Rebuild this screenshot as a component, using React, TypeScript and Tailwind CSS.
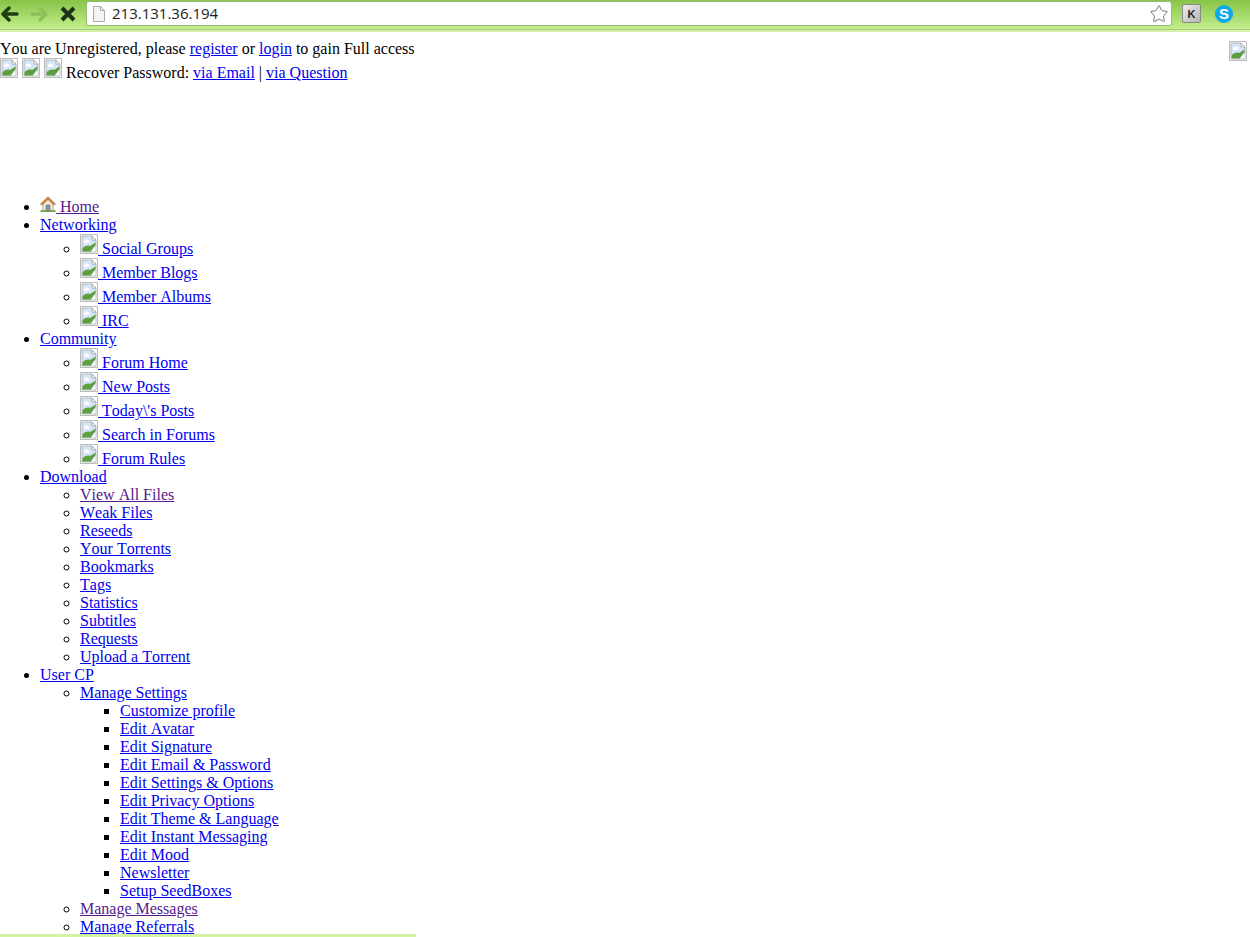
import { Star } from 'lucide-react';
import type { ReactNode } from 'react';

function BrokenImage({ block }: { block?: boolean }) {
  return (
    <svg viewBox="0 0 18 20" className={block ? 'block h-5 w-[18px]' : 'inline h-5 w-[18px] align-baseline'}>
      <rect x="0.5" y="0.5" width="17" height="19" fill="#fff" stroke="#bdbdbd" />
      <path d="M2 2h10l4 4v12H2z" fill="#d3e4fb" stroke="#a9a9a9" strokeWidth="0.8" />
      <path d="M12 2v4h4z" fill="#fff" stroke="#a0a0a0" strokeWidth="0.8" />
      <path d="M4 7c1-2 4-2 5 0 1 1 1 2-1 2H5C3.500 9 3.500 8 4 7z" fill="#fff" />
      <path d="M2.500 17.500V14.500C5 11.500 8 11 10 12l5.500-3.500V11l-5 6.500z" fill="#5f9e3f" />
      <path d="M11.500 17.500l4-5v5z" fill="#fff" />
    </svg>
  );
}

function HomeIcon() {
  return (
    <svg viewBox="0 0 16 16" className="inline h-4 w-4 align-baseline">
      <path d="M0.500 14h15v2h-15z" fill="#6fae45" />
      <path d="M3 7.500 8 3l5 4.500v7H3z" fill="#f3e8d2" stroke="#a88a62" strokeWidth="0.7" />
      <path d="M6 9h4v5.500H6z" fill="#7f94a8" stroke="#5f6f80" strokeWidth="0.5" />
      <path d="M0.500 8 8 0.800 15.500 8l-1.500 1L8 3.400 2 9z" fill="#d2843e" stroke="#95582a" strokeWidth="0.5" />
    </svg>
  );
}

function A({ children, visited }: { children: ReactNode; visited?: boolean }) {
  return (
    <a href="#" className={visited ? 'text-[#551a8b] underline' : 'text-[#0000ee] underline'}>
      {children}
    </a>
  );
}

const networking = ['Social Groups', 'Member Blogs', 'Member Albums', 'IRC'];
const community = ['Forum Home', 'New Posts', "Today\\'s Posts", 'Search in Forums', 'Forum Rules'];
const download = ['Weak Files', 'Reseeds', 'Your Torrents', 'Bookmarks', 'Tags', 'Statistics', 'Subtitles', 'Requests', 'Upload a Torrent'];
const settings = [
  'Customize profile',
  'Edit Avatar',
  'Edit Signature',
  'Edit Email & Password',
  'Edit Settings & Options',
  'Edit Privacy Options',
  'Edit Theme & Language',
  'Edit Instant Messaging',
  'Edit Mood',
  'Newsletter',
  'Setup SeedBoxes',
];

function IconLinks({ items }: { items: string[] }) {
  return (
    <ul className="list-[circle] pl-10">
      {items.map((item) => (
        <li key={item}>
          <A>
            <BrokenImage /> {item}
          </A>
        </li>
      ))}
    </ul>
  );
}

function Toolbar() {
  return (
    <div className="flex h-8 flex-col bg-[#d3f3a3]">
      <div className="flex h-[30px] items-start border-b border-[#a8c884] bg-gradient-to-b from-[#86c445] to-[#c4ee8c] pt-px">
        <div className="flex h-[25px] w-[86px] shrink-0 items-center">
          <svg viewBox="0 0 18 16" className="ml-[1px] h-4 w-[18px]">
            <path d="M8 2 2 8l6 6M3 8h13" fill="none" stroke="#1f3d14" strokeWidth="3.400" strokeLinejoin="round" strokeLinecap="round" />
          </svg>
          <svg viewBox="0 0 18 16" className="ml-[11px] h-4 w-[18px]">
            <path d="M10 2l6 6-6 6M15 8H2" fill="none" stroke="#8fbe5c" strokeWidth="3.400" strokeLinejoin="round" strokeLinecap="round" />
          </svg>
          <svg viewBox="0 0 18 18" className="ml-[11px] h-[18px] w-[18px]">
            <path d="M3 3l12 12M15 3 3 15" fill="none" stroke="#1f3319" strokeWidth="4" />
          </svg>
        </div>
        <div className="flex h-[25px] w-[1086px] shrink-0 items-center justify-between rounded-[3px] border border-[#9ab878] bg-white">
          <div className="flex items-center">
            <svg viewBox="0 0 14 16" className="ml-[5px] h-4 w-[14px]">
              <path d="M1.500 0.500h7l4 4v11h-11z" fill="#f4f4f4" stroke="#a8a8a8" />
              <path d="M8.500 0.500v4h4" fill="none" stroke="#a8a8a8" />
            </svg>
            <span className="ml-[6px] -translate-y-px font-['Open_Sans',sans-serif] text-[15px] text-[#222]">213.131.36.194</span>
          </div>
          <Star className="mr-[2px] h-5 w-5 text-[#777]" strokeWidth={1.2} />
        </div>
        <div className="ml-[10px] mt-[3px] flex h-[19px] w-[19px] shrink-0 items-center justify-center rounded-[2px] border border-[#8a8a8a] bg-gradient-to-br from-[#eeeeee] to-[#b4b4b4] font-['Liberation_Sans',sans-serif] text-[11px] font-bold text-[#222]">
          K
        </div>
        <div className="ml-[14px] mt-[4px] flex h-[18px] w-[18px] shrink-0 items-center justify-center rounded-full bg-[#0aa9e8] font-['Liberation_Sans',sans-serif] text-[15px] font-bold text-white">
          S
        </div>
      </div>
    </div>
  );
}

export default function App() {
  return (
    <div className="relative h-[937px] w-[1250px] overflow-hidden bg-white font-['Liberation_Serif',serif] text-[16px] leading-[18px] text-black [font-kerning:none]">
      <Toolbar />
      <div className="pt-2">
        <div className="float-right mr-[3px] mt-px">
          <BrokenImage block />
        </div>
        <div>
          You are Unregistered, please <A>register</A> or <A>login</A> to gain Full access
        </div>
        <div>
          <BrokenImage /> <BrokenImage /> <BrokenImage /> Recover Password: <A>via Email</A> | <A>via Question</A>
        </div>
      </div>

      <ul className="mt-[114px] list-disc pl-10">
        <li>
          <A visited>
            <HomeIcon /> Home
          </A>
        </li>
        <li>
          <A>Networking</A>
          <IconLinks items={networking} />
        </li>
        <li>
          <A>Community</A>
          <IconLinks items={community} />
        </li>
        <li>
          <A>Download</A>
          <ul className="list-[circle] pl-10">
            <li>
              <A visited>View All Files</A>
            </li>
            {download.map((item) => (
              <li key={item}>
                <A>{item}</A>
              </li>
            ))}
          </ul>
        </li>
        <li>
          <A>User CP</A>
          <ul className="list-[circle] pl-10">
            <li>
              <A>Manage Settings</A>
              <ul className="list-[square] pl-10">
                {settings.map((item) => (
                  <li key={item}>
                    <A>{item}</A>
                  </li>
                ))}
              </ul>
            </li>
            <li>
              <A visited>Manage Messages</A>
            </li>
            <li>
              <A>Manage Referrals</A>
            </li>
          </ul>
        </li>
      </ul>

      <div className="absolute bottom-0 left-0 h-[3px] w-[416px] bg-[#d3f3a3]" />
    </div>
  );
}
